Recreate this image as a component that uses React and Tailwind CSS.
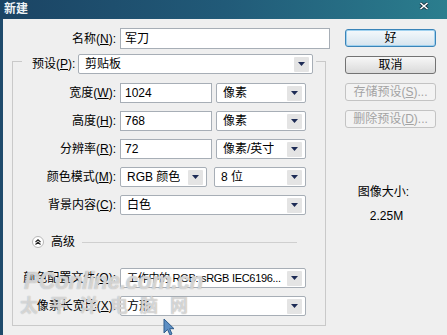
import { useState } from "react";

const Arrow = () => (
  <div className="w-[15px] h-[15px] shrink-0 mr-[3px] bg-[#e4e4e4] rounded-[1px] flex items-center justify-center">
    <svg width="7" height="4" viewBox="0 0 7 4">
      <path d="M0 0H7L3.5 4Z" fill="#1d2b55" />
    </svg>
  </div>
);

const Select = ({ value, width, tight }) => (
  <div className={`${width} h-[20px] bg-white border border-[#a7aeb6] rounded-[2px] flex items-center justify-between pl-[6px]`}>
    <span className={`leading-[14px] whitespace-nowrap overflow-hidden ${tight ? "text-[11px] tracking-[-0.3px]" : ""}`}>{value}</span>
    <Arrow />
  </div>
);

const Input = ({ value, width }) => (
  <div className={`${width} h-[20px] bg-white border border-[#a7aeb6] flex items-center pl-[4px]`}>
    <span className="leading-[14px]">{value}</span>
  </div>
);

const Label = ({ text, hot, width = "w-[107px]" }) => (
  <div className={`${width} text-right pr-[4px] leading-[14px] whitespace-nowrap`}>
    {text}(<span className="underline">{hot}</span>):
  </div>
);

const Button = ({ children, primary, disabled }) => (
  <div
    className={`h-[18px] rounded-[3px] flex items-center justify-center leading-[14px] border ${
      primary
        ? "border-[#3a84b8] bg-gradient-to-b from-[#f4f9fc] to-[#d6e4ee] shadow-[inset_0_0_0_1px_#9fd1ef]"
        : disabled
        ? "border-[#c3c3c3] bg-[#f3f3f3] text-[#a3a3a3]"
        : "border-[#737373] bg-gradient-to-b from-[#f7f7f7] to-[#dadada]"
    }`}
  >
    {children}
  </div>
);

export default function App() {
  const [open] = useState(true);

  return (
    <div className="w-[447px] h-[335px] bg-[#efefef] flex flex-col overflow-hidden relative text-[12px] text-black font-['Liberation_Sans','Noto_Sans_CJK_SC',sans-serif]">
      {/* title bar */}
      <div className="h-[19px] shrink-0 bg-gradient-to-r from-[#1b4464] via-[#215a78] to-[#2b7e8e] flex items-start justify-between pl-[4px] pr-[18px]">
        <span className="text-[#eef3f6] leading-[19px] font-bold">新建</span>
        <svg width="10" height="8" viewBox="0 0 10 8" className="mt-[2px]">
          <path d="M1.5 1L8.5 7M8.5 1L1.5 7" stroke="#1a2b3a" strokeWidth="3" />
          <path d="M1.5 1L8.5 7M8.5 1L1.5 7" stroke="#ffffff" strokeWidth="1.6" />
        </svg>
      </div>

      <div className="flex-1 flex border-l-[3px] border-[#1e4a6b]">
        {/* left column */}
        <div className="w-[342px] shrink-0">
          <div className="flex items-center mt-[9px] h-[21px]">
            <Label text="名称" hot="N" width="w-[117px]" />
            <Input value="军刀" width="w-[210px] h-[21px]" />
          </div>

          <div className="ml-[9px] mt-[12px] w-[314px] border border-[#c9c9c9] pb-[9px]">
            <div className="flex items-center -mt-[8px] pl-[9px]">
              <div className="flex items-center bg-[#efefef] pl-[10px] pr-[3px]">
                <div className="w-[46px] leading-[14px] whitespace-nowrap">
                  预设(<span className="underline">P</span>):
                </div>
                <Select value="剪贴板" width="w-[235px]" />
              </div>
            </div>

            <div className="flex items-center mt-[9px]">
              <Label text="宽度" hot="W" />
              <Input value="1024" width="w-[92px]" />
              <div className="ml-[4px]">
                <Select value="像素" width="w-[90px]" />
              </div>
            </div>
            <div className="flex items-center mt-[8px]">
              <Label text="高度" hot="H" />
              <Input value="768" width="w-[92px]" />
              <div className="ml-[4px]">
                <Select value="像素" width="w-[90px]" />
              </div>
            </div>
            <div className="flex items-center mt-[8px]">
              <Label text="分辨率" hot="R" />
              <Input value="72" width="w-[92px]" />
              <div className="ml-[4px]">
                <Select value="像素/英寸" width="w-[90px]" />
              </div>
            </div>
            <div className="flex items-center mt-[8px]">
              <Label text="颜色模式" hot="M" />
              <Select value="RGB 颜色" width="w-[87px]" />
              <div className="ml-[7px]">
                <Select value="8 位" width="w-[92px]" />
              </div>
            </div>
            <div className="flex items-center mt-[8px]">
              <Label text="背景内容" hot="C" />
              <Select value="白色" width="w-[186px]" />
            </div>

            <div className="flex items-center mt-[20px] h-[14px] pl-[19px] pr-[28px]">
              <div className="w-[12px] h-[12px] rounded-full bg-white border border-[#b8b8b8] flex items-center justify-center">
                <svg width="6" height="6" viewBox="0 0 6 6">
                  <path d="M0.5 3L3 0.8L5.5 3M0.5 5.5L3 3.3L5.5 5.5" fill="none" stroke="#222" strokeWidth="1.1" />
                </svg>
              </div>
              <span className="ml-[7px] leading-[14px]">{open ? "高级" : ""}</span>
              <div className="ml-[7px] flex-1 border-t border-[#cfcfcf]" />
            </div>

            <div className="flex items-center mt-[19px]">
              <Label text="颜色配置文件" hot="O" />
              <Select value="工作中的 RGB: sRGB IEC6196..." width="w-[186px]" tight />
            </div>
            <div className="flex items-center mt-[8px]">
              <Label text="像素长宽比" hot="X" />
              <Select value="方形" width="w-[186px]" />
            </div>
          </div>
        </div>

        {/* right column */}
        <div className="w-[91px] shrink-0 flex flex-col pt-[10px] gap-[9px]">
          <Button primary>好</Button>
          <Button>取消</Button>
          <Button disabled>
            存储预设(<span className="underline">S</span>)...
          </Button>
          <Button disabled>
            删除预设(<span className="underline">D</span>)...
          </Button>
          <div className="mt-[49px] pr-[14px] text-center leading-[12px]">图像大小:</div>
          <div className="mt-[3px] pr-[8px] text-center leading-[12px]">2.25M</div>
        </div>
      </div>

      {/* watermark */}
      <div className="absolute left-[24px] top-[268px] text-[23px] font-bold italic tracking-[-0.5px] text-white/55 [text-shadow:0_0_1px_#9a9a9a] leading-[26px] pointer-events-none">
        PConline.com.cn
      </div>
      <div className="absolute left-[20px] top-[293px] text-[18px] font-bold tracking-[12px] text-white/55 [text-shadow:0_0_1px_#9a9a9a] leading-[22px] pointer-events-none font-['Noto_Sans_CJK_SC',sans-serif]">
        太平洋电脑网
      </div>

      {/* cursor */}
      <svg className="absolute left-[163px] top-[318px]" width="12" height="18" viewBox="0 0 12 18">
        <path d="M1 1V15L4.5 11.5L7 17L9 16L6.7 10.7H11Z" fill="#5d8fc4" stroke="#2e5c8c" strokeWidth="1" />
      </svg>
    </div>
  );
}
